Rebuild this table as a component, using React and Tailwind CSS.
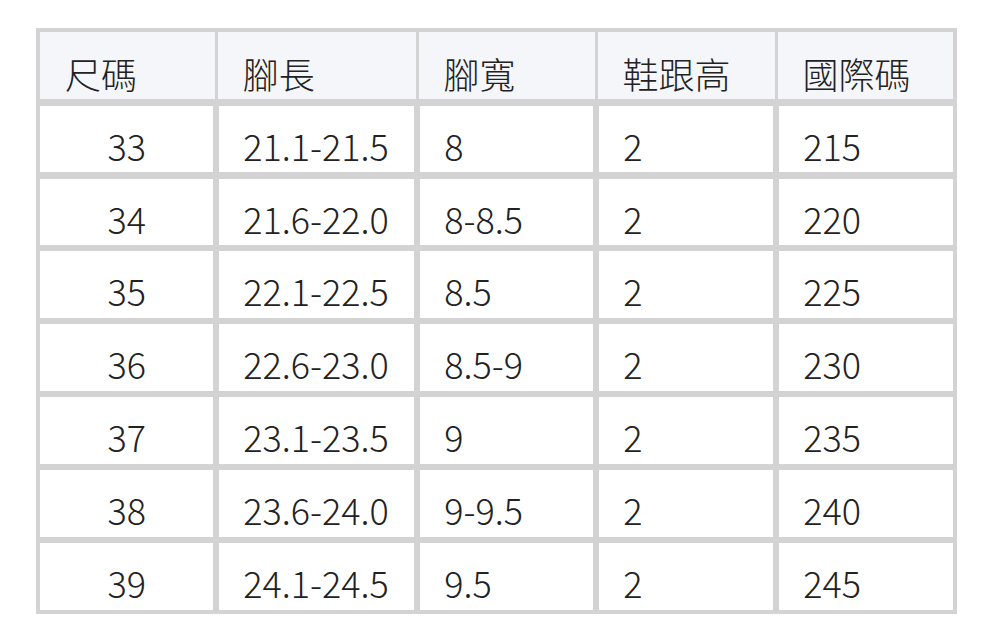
import React from "react";

const headers = ["尺碼", "腳長", "腳寬", "鞋跟高", "國際碼"];
const rows = [
  ["33", "21.1-21.5", "8", "2", "215"],
  ["34", "21.6-22.0", "8-8.5", "2", "220"],
  ["35", "22.1-22.5", "8.5", "2", "225"],
  ["36", "22.6-23.0", "8.5-9", "2", "230"],
  ["37", "23.1-23.5", "9", "2", "235"],
  ["38", "23.6-24.0", "9-9.5", "2", "240"],
  ["39", "24.1-24.5", "9.5", "2", "245"],
];

export default function App() {
  return (
    <div
      className="min-h-[641px] w-[992px] bg-white pt-[28px] pl-[36px] text-[#222222] font-light"
      style={{ fontFamily: '"Noto Sans CJK TC", "Noto Sans", sans-serif' }}
    >
      <div className="flex w-[921px] flex-col bg-[#d3d3d3] p-[4px]">
        <div className="grid h-[67px] grid-cols-[175px_198.3px_176.3px_177.3px_175.3px] gap-x-[2.67px]">
          {headers.map((h) => (
            <div
              key={h}
              className="bg-[#f5f6fa] pl-[25px] pt-[23px] text-[36px] leading-[36px]"
            >
              {h}
            </div>
          ))}
        </div>
        <div className="mt-[6.7px] flex flex-col gap-y-[6.4px]">
          {rows.map((r) => (
            <div
              key={r[0]}
              className="grid h-[66.5px] grid-cols-[173.3px_195px_173px_174px_173.7px] gap-x-[6px]"
            >
              {r.map((c, i) => (
                <div
                  key={i}
                  className={
                    i === 0
                      ? "bg-white pt-[21px] text-center text-[36px] leading-[36px]"
                      : "bg-white pl-[24px] pt-[21px] text-[36px] leading-[36px]"
                  }
                >
                  {c}
                </div>
              ))}
            </div>
          ))}
        </div>
      </div>
    </div>
  );
}
